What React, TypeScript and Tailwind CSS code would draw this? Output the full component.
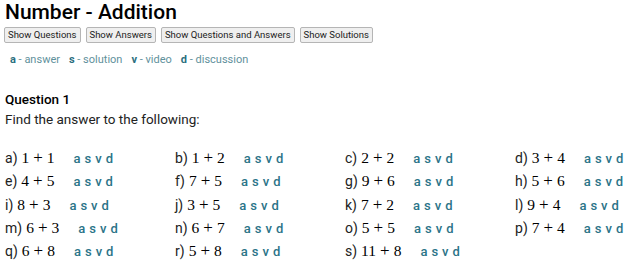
const questions: [string, string, string][] = [
  ["a", "1", "1"],
  ["b", "1", "2"],
  ["c", "2", "2"],
  ["d", "3", "4"],
  ["e", "4", "5"],
  ["f", "7", "5"],
  ["g", "9", "6"],
  ["h", "5", "6"],
  ["i", "8", "3"],
  ["j", "3", "5"],
  ["k", "7", "2"],
  ["l", "9", "4"],
  ["m", "6", "3"],
  ["n", "6", "7"],
  ["o", "5", "5"],
  ["p", "7", "4"],
  ["q", "6", "8"],
  ["r", "5", "8"],
  ["s", "11", "8"],
];

const buttons = ["Show Questions", "Show Answers", "Show Questions and Answers", "Show Solutions"];

const legend: [string, string][] = [
  ["a", "answer"],
  ["s", "solution"],
  ["v", "video"],
  ["d", "discussion"],
];

function Links() {
  return (
    <span className="ml-[19px] inline-flex gap-[4px] text-[13px] font-medium text-[#2b7488]">
      <span>a</span>
      <span>s</span>
      <span>v</span>
      <span>d</span>
    </span>
  );
}

export default function App() {
  return (
    <div className="bg-white w-[640px] h-[278px] overflow-hidden px-[5px] font-['Roboto',sans-serif] text-[#111]">
      <h1 className="text-[21px] font-medium leading-[24px] text-black">Number - Addition</h1>
      <div className="flex gap-[5px] mt-[3px] -ml-[1px]">
        {buttons.map((b) => (
          <button
            key={b}
            className="h-[16px] px-[3px] text-[9.5px] leading-[14px] text-[#222] bg-[#efefef] border border-[#b5b5b5] rounded-[2px]"
          >
            {b}
          </button>
        ))}
      </div>
      <div className="flex gap-[9px] mt-[10px] ml-[5px] text-[11px] leading-[14px]">
        {legend.map(([k, v]) => (
          <span key={k} className="text-[#5f919c]">
            <span className="font-bold text-[#2b6f80]">{k}</span> - {v}
          </span>
        ))}
      </div>
      <div className="mt-[23px] text-[13.5px] font-medium leading-[18px] text-black">Question 1</div>
      <div className="mt-[2px] text-[13.5px] leading-[18px] text-[#222]">Find the answer to the following:</div>
      <div className="grid grid-cols-[170px_170px_170px_125px] mt-[17px]">
        {questions.map(([l, x, y]) => (
          <div key={l} className="flex items-baseline h-[23.3px] text-[14px]">
            <span className="text-[#222]">{l})</span>
            <span className="ml-[4px] font-['Liberation_Serif',serif] text-[15.5px] text-black">
              {x}
              <span className="mx-[4px] text-[17px]">+</span>
              {y}
            </span>
            <Links />
          </div>
        ))}
      </div>
    </div>
  );
}
